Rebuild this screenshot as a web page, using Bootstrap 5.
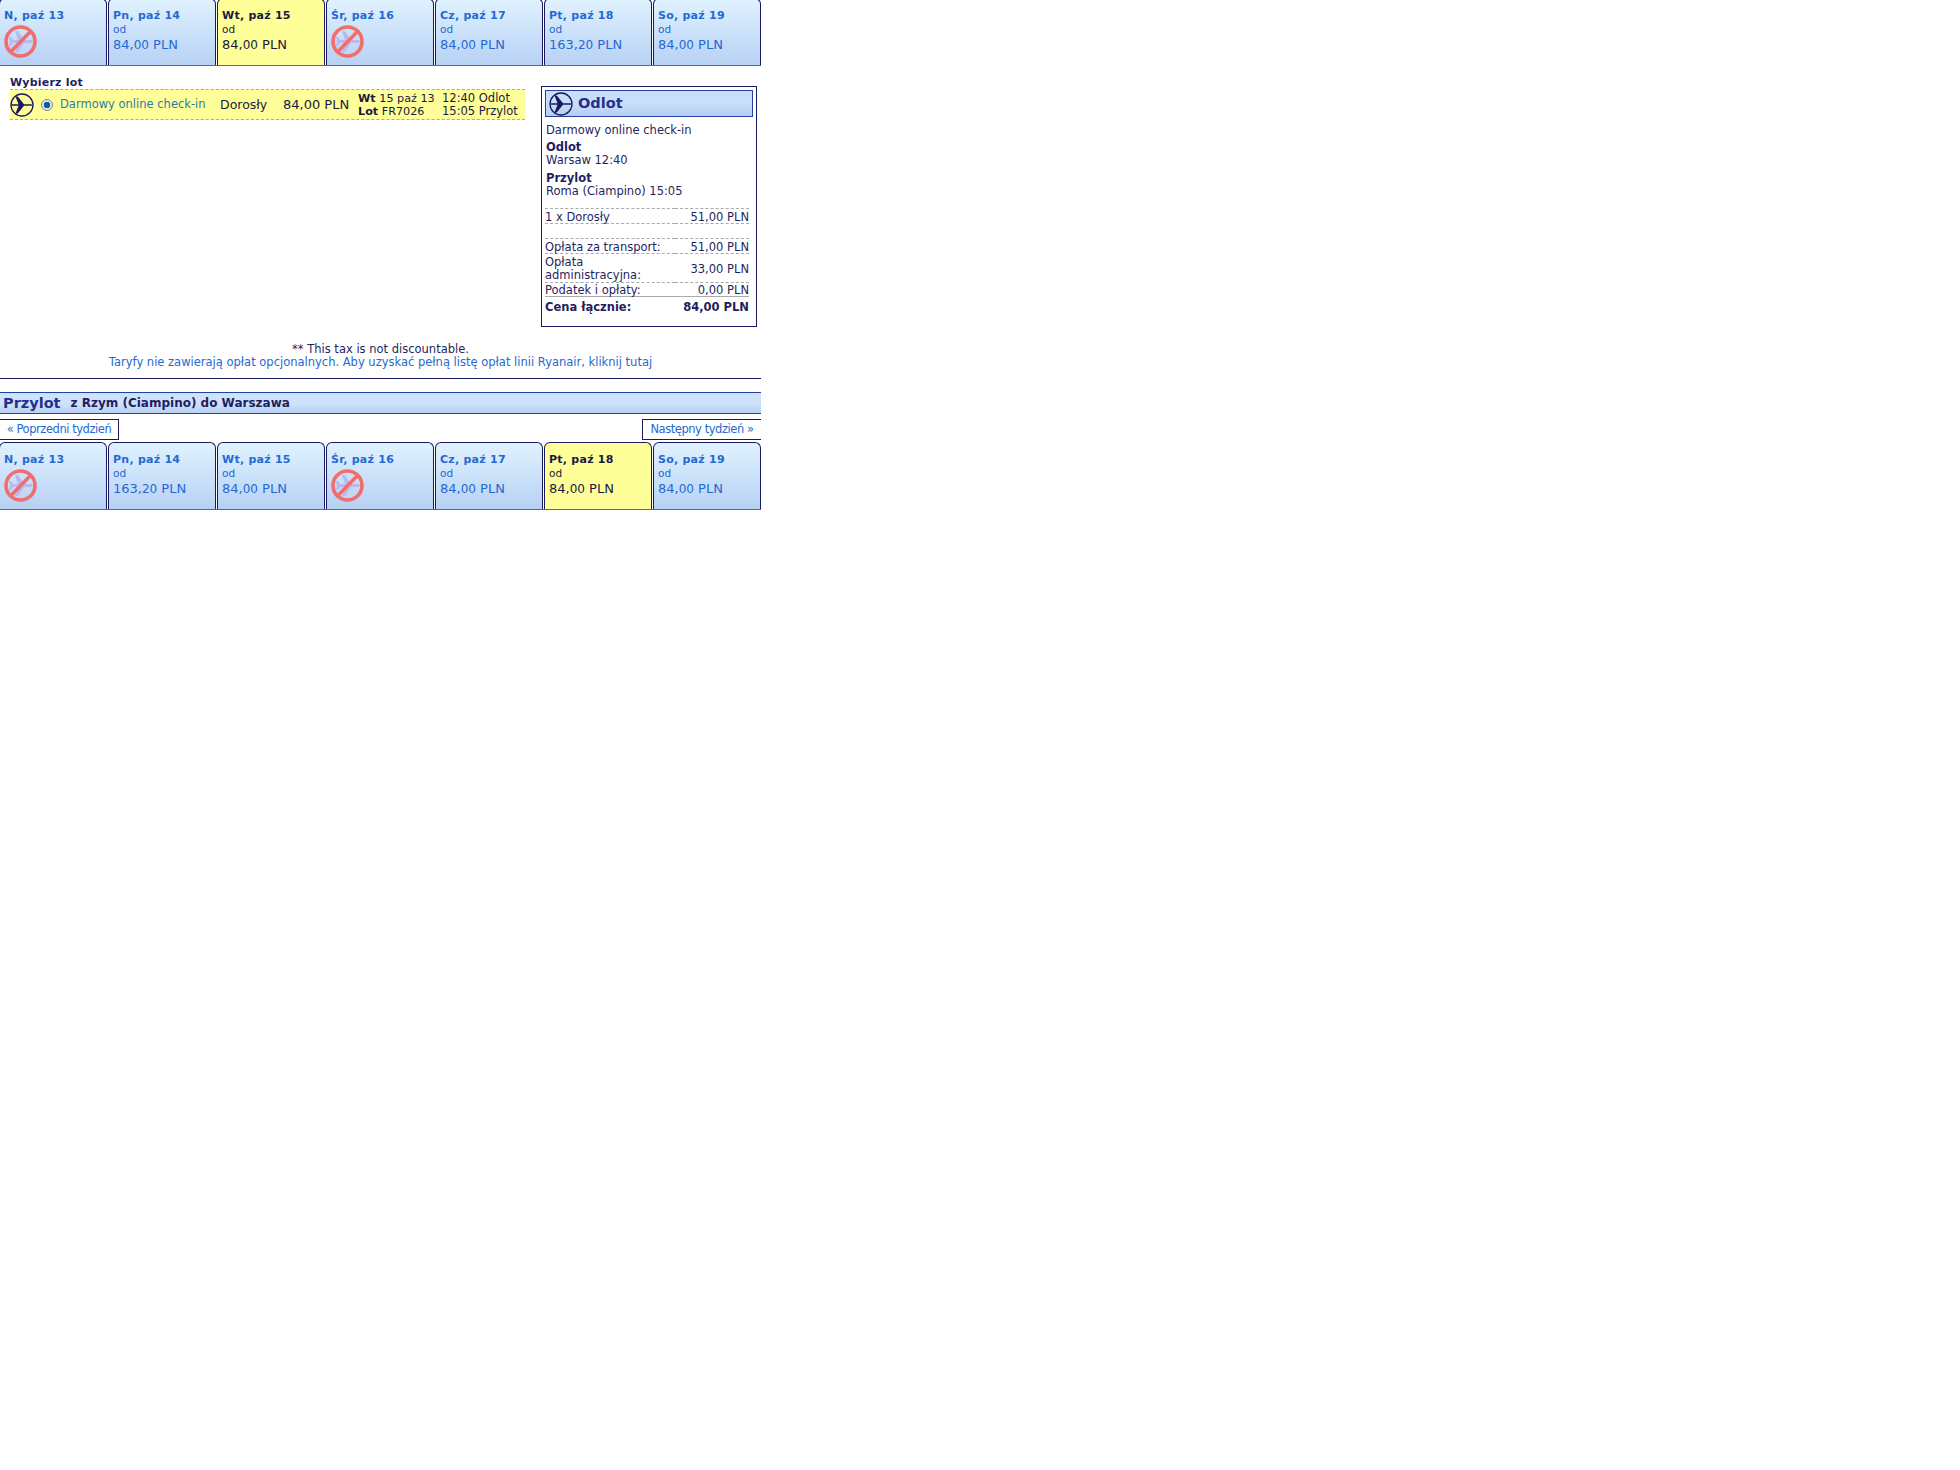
<!DOCTYPE html>
<html lang="pl"><head><meta charset="utf-8"><title>Loty</title>
<link href="https://cdn.jsdelivr.net/npm/bootstrap@5.3.0/dist/css/bootstrap.min.css" rel="stylesheet">
<style>
body{font-family:"DejaVu Sans",Verdana,sans-serif;font-size:11.5px;line-height:13px;color:#1f1f5e;background:#fff}
a{text-decoration:none;color:#2469d2}
.pg{width:761px;margin-top:-2px}
.tabs{gap:1px;margin-left:-1px;border-bottom:1px solid #667}
.tb{width:108px;height:67px;flex:none;padding:10px 0 0 4px;border:1px solid #1a1a5e;border-bottom:0;border-radius:6px 6px 0 0;background:linear-gradient(#e0f2ff,#b7d1f4);color:#2469d2}
.tb.sel{background:#ffff99;color:#1a1a3e}
.tb b{display:block;font-size:11px;line-height:13px;letter-spacing:.25px}
.tb span{display:block;font-size:10.5px;line-height:12px;margin-top:1px}
.tb em{display:block;font-style:normal;font-size:13px;line-height:16px;margin-top:2px}
.tb em small{font-size:12px}
.tb svg{display:block;margin-top:3px}
.mid{padding:0 4px 0 10px;margin-top:11px;gap:16px}
.fl{width:515px}
.fl h6{font-size:11px;font-weight:700;line-height:12px;margin:0;letter-spacing:.2px;color:#1f1f5e}
.fr{height:31px;background:#ffff99;border-top:1px dashed #aaa;border-bottom:1px dashed #aaa;color:#1a1a3e;white-space:nowrap}
.fr .rd{width:12px;height:12px;border-radius:50%;border:1px solid #888;background:radial-gradient(circle,#0a5f9e 0 3px,#e4e4e4 3.5px);margin:0 7px;flex:none}
.fr .nm{width:160px;color:#2d7ba8;flex:none}
.fr .pa{width:63px;font-size:12.5px;flex:none}
.fr .pr{width:65px;font-size:13px;flex:none}
.fr .dt{margin-left:10px;width:84px;flex:none;font-size:11.2px;line-height:13px}
.fr .tm{flex:none;line-height:13px}
.sm{width:216px;height:241px;border:1px solid #1a1a5e;padding:3px 3px 0;margin-top:9px}
.sh{height:27px;border:1px solid #24419c;background:linear-gradient(#c9defa 0 50%,#b3cdf3);font-size:14.5px;font-weight:700;color:#24318c;gap:5px;padding-left:3px}
.sm p{margin:0 0 0 1px;line-height:13px}
.sm p.g1{margin-top:7px}
.sm p.g2{margin-top:5px}
.sm table{width:204px;margin:10px 0 0 0;border-collapse:collapse;border-top:1px dashed #aaa}
.sm td{padding:3px 0 0;border-bottom:1px dashed #aaa;line-height:11px;vertical-align:middle}
.sm td:last-child{text-align:right;white-space:nowrap}
.sm tr.ad td{padding:2px 0 0;line-height:13px}
.sm tr.la td{border-bottom:1px solid #aaa;padding:2px 0 0}
.sm tr.tot td{border-bottom:0;font-weight:700;padding-top:4px;line-height:13px}
.sm tr.sp td{height:15px;padding:0}
.nt{text-align:center;margin-top:16px;line-height:13px}
.ln{border-top:1px solid #1a1a5e;margin-top:9px}
.pb{margin-top:13px;height:22px;border-top:1px solid #24419c;border-bottom:1px solid #24419c;background:linear-gradient(#cfe2fb 0 50%,#b9d1f5);font-weight:700;font-size:12px;padding-left:3px;color:#1f1f5e}
.pb strong{font-size:14.5px;color:#24318c;margin-right:10px}
.wk{margin-top:5px;margin-bottom:2px}
.wk a{width:119px;height:21px;border:1px solid #1a1a5e;font-size:11.5px;letter-spacing:-.45px;line-height:19px;text-align:center}
.wk a:first-child{border-left:0}
.wk a:last-child{border-right:0}
</style></head><body>
<svg width="0" height="0" class="d-block"><defs>
<symbol id="pl" viewBox="0 0 24 24"><circle cx="12" cy="12" r="11" fill="none" stroke="#1a1a5e" stroke-width="1.3"/><path fill="#1a1a5e" d="M1.500 11.300h7L5.500 3.500h2.300l6.200 7.800h6c1.700 0 3 .3 3 .7s-1.300.7-3 .7h-6l-6.200 7.800H5.500l3-7.800h-7z"/></symbol>
<symbol id="no" viewBox="0 0 33 33"><path fill="#b9b9ec" d="M5 12h2l2 3h5L11 6h3l6 9h6c2 0 3 .7 3 1.500s-1 1.500-3 1.500h-6l-6 9h-3l3-9H9l-2 3H5l1-4.500z"/><circle cx="16.500" cy="16.500" r="14.500" fill="none" stroke="#f26d6d" stroke-width="3.600"/><path stroke="#f26d6d" stroke-width="3.600" d="M6.500 27 27 6"/></symbol>
</defs></svg>
<div class="pg">
<div class="d-flex tabs">
<div class="tb"><b>N, paź 13</b><svg width="33" height="33"><use href="#no"/></svg></div>
<div class="tb"><b>Pn, paź 14</b><span>od</span><em>84,<small>00</small> PLN</em></div>
<div class="tb sel"><b>Wt, paź 15</b><span>od</span><em>84,<small>00</small> PLN</em></div>
<div class="tb"><b>Śr, paź 16</b><svg width="33" height="33"><use href="#no"/></svg></div>
<div class="tb"><b>Cz, paź 17</b><span>od</span><em>84,<small>00</small> PLN</em></div>
<div class="tb"><b>Pt, paź 18</b><span>od</span><em>163,<small>20</small> PLN</em></div>
<div class="tb"><b>So, paź 19</b><span>od</span><em>84,<small>00</small> PLN</em></div>
</div>
<div class="d-flex mid">
<div class="fl"><h6>Wybierz lot</h6>
<div class="d-flex align-items-center fr"><svg width="24" height="24"><use href="#pl"/></svg><i class="rd"></i><a class="nm" href="#">Darmowy online check-in</a><span class="pa">Dorosły</span><span class="pr">84,00 PLN</span>
<div class="dt"><b>Wt</b> 15 paź 13<br><b>Lot</b> FR7026</div><div class="tm">12:40 Odlot<br>15:05 Przylot</div></div></div>
<div class="sm">
<div class="d-flex align-items-center sh"><svg width="24" height="24"><use href="#pl"/></svg>Odlot</div>
<p class="g1">Darmowy online check-in</p>
<p class="mt-1"><b>Odlot</b><br>Warsaw 12:40</p>
<p class="g2"><b>Przylot</b><br>Roma (Ciampino) 15:05</p>
<table><tr><td>1 x Dorosły</td><td>51,00 PLN</td></tr><tr class="sp"><td></td><td></td></tr>
<tr><td>Opłata za transport:</td><td>51,00 PLN</td></tr><tr class="ad"><td>Opłata<br>administracyjna:</td><td>33,00 PLN</td></tr><tr class="la"><td>Podatek i opłaty:</td><td>0,00 PLN</td></tr><tr class="tot"><td>Cena łącznie:</td><td>84,00 PLN</td></tr></table>
</div></div>
<div class="nt">** This tax is not discountable.<br><a href="#">Taryfy nie zawierają opłat opcjonalnych. Aby uzyskać pełną listę opłat linii Ryanair, kliknij tutaj</a></div>
<div class="ln"></div>
<div class="d-flex align-items-center pb"><strong>Przylot</strong>z Rzym (Ciampino) do Warszawa</div>
<div class="d-flex justify-content-between wk"><a href="#">« Poprzedni tydzień</a><a href="#">Następny tydzień »</a></div>
<div class="d-flex tabs">
<div class="tb"><b>N, paź 13</b><svg width="33" height="33"><use href="#no"/></svg></div>
<div class="tb"><b>Pn, paź 14</b><span>od</span><em>163,<small>20</small> PLN</em></div>
<div class="tb"><b>Wt, paź 15</b><span>od</span><em>84,<small>00</small> PLN</em></div>
<div class="tb"><b>Śr, paź 16</b><svg width="33" height="33"><use href="#no"/></svg></div>
<div class="tb"><b>Cz, paź 17</b><span>od</span><em>84,<small>00</small> PLN</em></div>
<div class="tb sel"><b>Pt, paź 18</b><span>od</span><em>84,<small>00</small> PLN</em></div>
<div class="tb"><b>So, paź 19</b><span>od</span><em>84,<small>00</small> PLN</em></div>
</div>
</div>
</body></html>
